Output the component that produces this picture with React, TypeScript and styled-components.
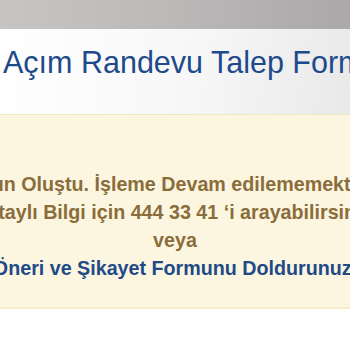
import React from "react";
import styled, { createGlobalStyle } from "styled-components";

const GlobalStyle = createGlobalStyle`
  html, body {
    margin: 0;
    padding: 0;
    background: #ffffff;
    overflow: hidden;
  }
  body {
    font-family: "Liberation Sans", Arial, Helvetica, sans-serif;
  }
`;

const Page = styled.div`
  width: 350px;
  height: 350px;
  overflow: hidden;
  display: flex;
  flex-direction: column;
`;

const TopBar = styled.div`
  height: 29px;
  flex: none;
  background: linear-gradient(90deg, #c7c4c4 0%, #bbb8b8 50%, #aaa8a8 100%);
`;

const Header = styled.div`
  height: 85px;
  flex: none;
  box-sizing: border-box;
  display: flex;
  align-items: flex-start;
  padding: 16px 0 0 3px;
  background: linear-gradient(100deg, #ffffff 0%, #f7f7f7 55%, #e9e9e9 100%);
  overflow: hidden;
`;

const Title = styled.h1`
  margin: 0;
  font-size: 30.5px;
  font-weight: normal;
  color: #1d4a8a;
  white-space: nowrap;
`;

const Alert = styled.div`
  flex: none;
  height: 195px;
  box-sizing: border-box;
  padding-top: 55px;
  background: #fcf6e1;
  border-top: 1px solid #f3e6c2;
  border-bottom: 2px solid #f6ecc9;
  display: flex;
  flex-direction: column;
  overflow: hidden;
`;

const Line = styled.div<{ $link?: boolean }>`
  display: flex;
  justify-content: center;
  white-space: nowrap;
  font-size: 19.7px;
  line-height: 28px;
  font-weight: bold;
  color: ${(p) => (p.$link ? "#1f4a87" : "#8a6d3b")};
`;

export default function App() {
  return (
    <Page>
      <GlobalStyle />
      <TopBar />
      <Header>
        <Title>Açım Randevu Talep Formu</Title>
      </Header>
      <Alert>
        <Line>Sorun Oluştu. İşleme Devam edilememektedir.</Line>
        <Line>Detaylı Bilgi için 444 33 41 ‘i arayabilirsiniz.</Line>
        <Line>veya</Line>
        <Line $link>Öneri ve Şikayet Formunu Doldurunuz.</Line>
      </Alert>
    </Page>
  );
}
